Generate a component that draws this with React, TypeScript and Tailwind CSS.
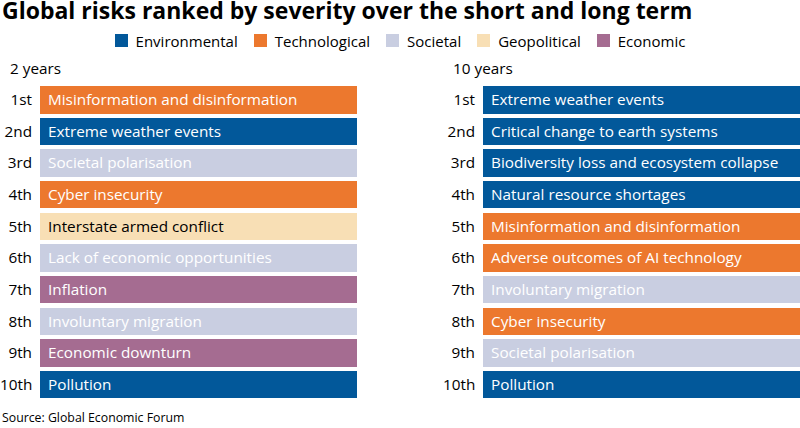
const COLORS = {
  env: 'bg-[#02589a] text-white',
  tech: 'bg-[#ec782e] text-white',
  soc: 'bg-[#c9cee1] text-white',
  geo: 'bg-[#f8dfb5] text-black',
  eco: 'bg-[#a56c91] text-white',
};

type Kind = keyof typeof COLORS;

const legend: { label: string; swatch: string }[] = [
  { label: 'Environmental', swatch: 'bg-[#02589a]' },
  { label: 'Technological', swatch: 'bg-[#ec782e]' },
  { label: 'Societal', swatch: 'bg-[#c9cee1]' },
  { label: 'Geopolitical', swatch: 'bg-[#f8dfb5]' },
  { label: 'Economic', swatch: 'bg-[#a56c91]' },
];

const ranks = ['1st', '2nd', '3rd', '4th', '5th', '6th', '7th', '8th', '9th', '10th'];

const shortTerm: [string, Kind][] = [
  ['Misinformation and disinformation', 'tech'],
  ['Extreme weather events', 'env'],
  ['Societal polarisation', 'soc'],
  ['Cyber insecurity', 'tech'],
  ['Interstate armed conflict', 'geo'],
  ['Lack of economic opportunities', 'soc'],
  ['Inflation', 'eco'],
  ['Involuntary migration', 'soc'],
  ['Economic downturn', 'eco'],
  ['Pollution', 'env'],
];

const longTerm: [string, Kind][] = [
  ['Extreme weather events', 'env'],
  ['Critical change to earth systems', 'env'],
  ['Biodiversity loss and ecosystem collapse', 'env'],
  ['Natural resource shortages', 'env'],
  ['Misinformation and disinformation', 'tech'],
  ['Adverse outcomes of AI technology', 'tech'],
  ['Involuntary migration', 'soc'],
  ['Cyber insecurity', 'tech'],
  ['Societal polarisation', 'soc'],
  ['Pollution', 'env'],
];

const RankColumn = ({ title, items, className }: { title: string; items: [string, Kind][]; className: string }) => (
  <div className={className}>
    <div className="pl-[10px] h-[20px] leading-[20px] text-[15.3px] text-black">{title}</div>
    <div className="mt-[8.5px] flex flex-col gap-[4.17px]">
      {items.map(([label, kind], i) => (
        <div key={label + i} className="flex items-stretch gap-[8px] h-[27.5px]">
          <span className="w-[32px] shrink-0 text-right text-[15.3px] leading-[27.5px] text-black whitespace-nowrap">
            {ranks[i]}
          </span>
          <div className={`flex-1 pl-[8px] text-[15.3px] leading-[27.5px] whitespace-nowrap ${COLORS[kind]}`}>
            {label}
          </div>
        </div>
      ))}
    </div>
  </div>
);

export default function App() {
  return (
    <div
      className="w-[800px] h-[428px] bg-white overflow-hidden"
      style={{ fontFamily: '"Open Sans", "Noto Sans", sans-serif' }}
    >
      <h1 className="pl-[2px] text-[23px] font-bold leading-[20px] text-black whitespace-nowrap">
        Global risks ranked by severity over the short and long term
      </h1>

      {/* Legend */}
      <div className="mt-[10.5px] flex justify-center items-center gap-[16px] h-[20px]">
        {legend.map((l) => (
          <div key={l.label} className="flex items-center gap-[8px]">
            <span className={`w-[13px] h-[13px] ${l.swatch}`} />
            <span className="text-[15px] leading-[20px] text-black">{l.label}</span>
          </div>
        ))}
      </div>

      <div className="mt-[7px] flex">
        <RankColumn title="2 years" items={shortTerm} className="w-[357px] shrink-0" />
        <RankColumn title="10 years" items={longTerm} className="ml-[86px] flex-1" />
      </div>

      <div className="pl-[2px] mt-[11px] text-[12.3px] leading-[18px] text-black">Source: Global Economic Forum</div>
    </div>
  );
}
